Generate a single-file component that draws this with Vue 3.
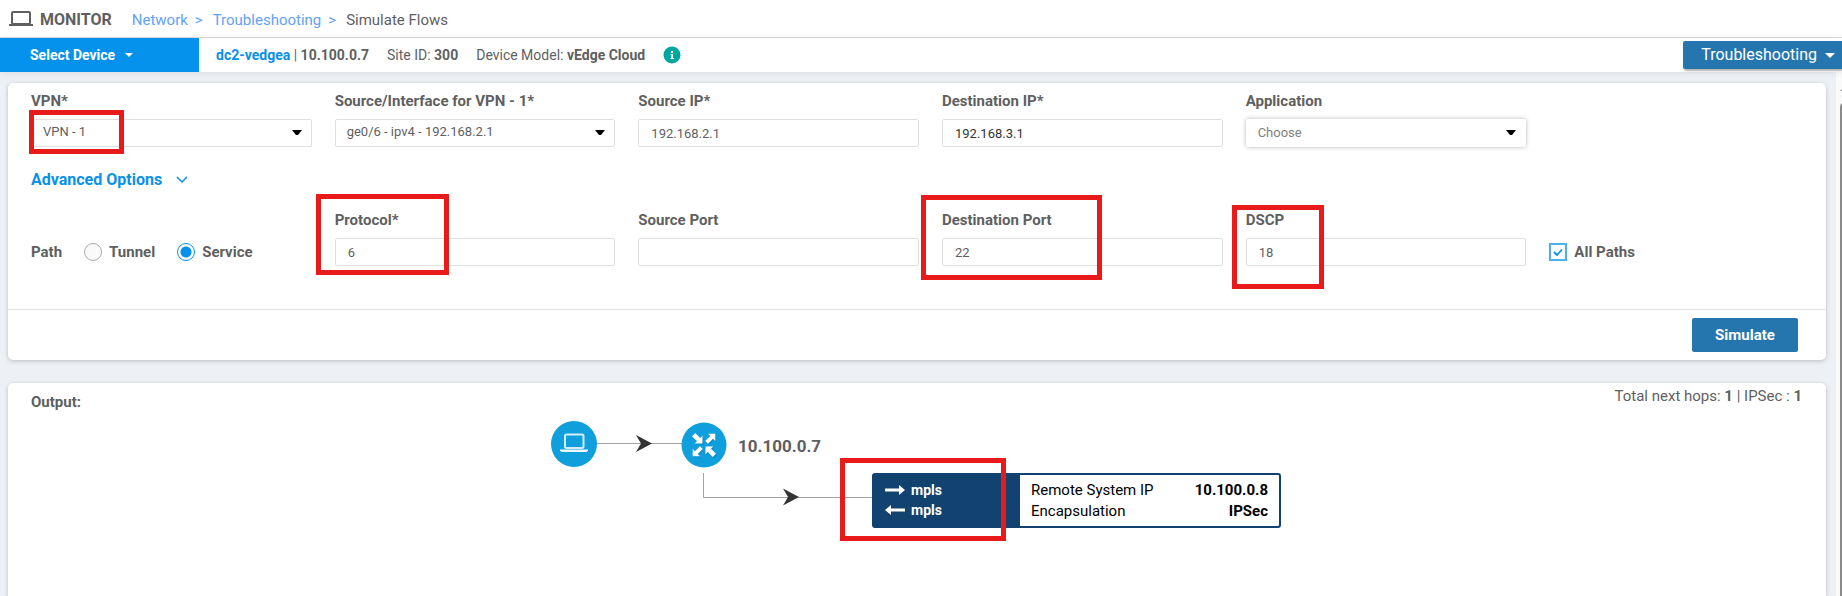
<script setup>
import { ref } from 'vue'

const vpn = ref('VPN - 1')
const sourceInterface = ref('ge0/6 - ipv4 - 192.168.2.1')
const sourceIp = ref('192.168.2.1')
const destinationIp = ref('192.168.3.1')
const application = ref('')
const path = ref('service')
const protocol = ref('6')
const sourcePort = ref('')
const destinationPort = ref('22')
const dscp = ref('18')
const allPaths = ref(true)
const advancedOpen = ref(true)

const routerArrows = [
  'M21.5 21.5V13.7L19.2 16L14.200 11L11 14.200L16 19.200L13.700 21.5Z',
  'M34.300 11.700H27L29.300 14L24.200 19L27 21.800L32 16.700L34.300 19Z',
  'M24.5 24.5V32.300L26.800 30L31.800 35L35 31.800L30 26.800L32.300 24.5Z',
  'M11.700 34.300H19L16.700 32L21.800 27L19 24.200L14 29.300L11.700 27Z',
]
</script>

<template>
  <div class="page">
    <header class="topbar">
      <svg class="laptop" width="24" height="18" viewBox="0 0 24 18" aria-hidden="true">
        <rect x="3" y="2" width="18" height="12" rx="1" fill="none" stroke="#5f5f5f" stroke-width="2" />
        <rect x="0" y="14" width="24" height="2" fill="#5f5f5f" />
      </svg>
      <h1>MONITOR</h1>
      <nav class="crumbs" aria-label="Breadcrumb">
        <a href="#">Network</a><span class="sep">&gt;</span>
        <a href="#">Troubleshooting</a><span class="sep">&gt;</span>
        <span>Simulate Flows</span>
      </nav>
    </header>

    <div class="devicebar">
      <button type="button" class="select-device">
        Select Device
        <svg width="8" height="4" viewBox="0 0 8 4" aria-hidden="true"><path d="M0 0H8L4 4Z" fill="#fff" /></svg>
      </button>
      <div class="device-info">
        <span><a href="#">dc2-vedgea</a> | <b>10.100.0.7</b></span>
        <span>Site ID: <b>300</b></span>
        <span>Device Model: <b>vEdge Cloud</b></span>
        <button type="button" class="info" aria-label="Device details">
          <svg width="18" height="18" viewBox="0 0 18 18" aria-hidden="true">
            <circle cx="9" cy="9" r="8.5" fill="#00a7a0" />
            <rect x="8" y="5" width="2" height="2" fill="#fff" />
            <path d="M7.5 8H10V12H11V13H7.5V12H8.3V9H7.5Z" fill="#fff" />
          </svg>
        </button>
      </div>
      <button type="button" class="troubleshooting">
        Troubleshooting
        <svg width="10" height="5" viewBox="0 0 10 5" aria-hidden="true"><path d="M0 0H10L5 5Z" fill="#fff" /></svg>
      </button>
    </div>

    <div class="body">
      <main>
        <form class="panel" @submit.prevent>
          <div class="grid">
            <div class="field">
              <label for="vpn">VPN*</label>
              <div class="pick">
                <select id="vpn" v-model="vpn"><option>VPN - 1</option></select>
                <svg class="caret" viewBox="0 0 10 5" aria-hidden="true"><path d="M0 0H10L6 5H4Z" /></svg>
              </div>
              <span class="mark mark-vpn"></span>
            </div>
            <div class="field">
              <label for="iface">Source/Interface for VPN - 1*</label>
              <div class="pick">
                <select id="iface" v-model="sourceInterface"><option>ge0/6 - ipv4 - 192.168.2.1</option></select>
                <svg class="caret" viewBox="0 0 10 5" aria-hidden="true"><path d="M0 0H10L6 5H4Z" /></svg>
              </div>
            </div>
            <div class="field">
              <label for="sip">Source IP*</label>
              <input id="sip" v-model="sourceIp" type="text" />
            </div>
            <div class="field">
              <label for="dip">Destination IP*</label>
              <input id="dip" v-model="destinationIp" class="edited" type="text" />
            </div>
            <div class="field">
              <label for="app-name">Application</label>
              <div class="pick raised">
                <select id="app-name" v-model="application"><option value="">Choose</option></select>
                <svg class="caret" viewBox="0 0 10 5" aria-hidden="true"><path d="M0 0H10L6 5H4Z" /></svg>
              </div>
            </div>
          </div>

          <button type="button" class="advanced" :aria-expanded="advancedOpen" @click="advancedOpen = !advancedOpen">
            Advanced Options
            <svg width="12" height="8" viewBox="0 0 12 8" aria-hidden="true">
              <path d="M1 1L6 6L11 1" fill="none" stroke="#0891ea" stroke-width="1.5" />
            </svg>
          </button>

          <div v-show="advancedOpen" class="grid">
            <div class="paths" role="radiogroup" aria-labelledby="path-label">
              <span id="path-label">Path</span>
              <label><input v-model="path" type="radio" name="path" value="tunnel" />Tunnel</label>
              <label><input v-model="path" type="radio" name="path" value="service" />Service</label>
            </div>
            <div class="field">
              <label for="protocol">Protocol*</label>
              <input id="protocol" v-model="protocol" type="text" />
              <span class="mark mark-protocol"></span>
            </div>
            <div class="field">
              <label for="sport">Source Port</label>
              <input id="sport" v-model="sourcePort" type="text" />
            </div>
            <div class="field">
              <label for="dport">Destination Port</label>
              <input id="dport" v-model="destinationPort" type="text" />
              <span class="mark mark-dport"></span>
            </div>
            <div class="field">
              <label for="dscp">DSCP</label>
              <input id="dscp" v-model="dscp" type="text" />
              <span class="mark mark-dscp"></span>
            </div>
            <div class="all-paths">
              <label>
                <span class="tick">
                  <input v-model="allPaths" type="checkbox" />
                  <svg v-if="allPaths" viewBox="0 0 18 18" aria-hidden="true">
                    <path d="M5 9L8 12L13 6.5" fill="none" stroke="#0891ea" stroke-width="1.8" />
                  </svg>
                </span>
                All Paths
              </label>
            </div>
          </div>

          <div class="actions"><button type="submit" class="simulate">Simulate</button></div>
        </form>

        <section class="panel output">
          <div class="output-head">
            <h2>Output:</h2>
            <p>Total next hops: <b>1</b> | IPSec : <b>1</b></p>
          </div>
          <div class="canvas">
            <svg class="wires" width="732" height="80" viewBox="0 0 732 80" aria-hidden="true">
              <path d="M46 22.5H131M152.5 52V76.5H321" fill="none" stroke="#a3a3a3" />
              <path d="M85 14L101 22.5L85 31L90 22.5ZM232 67.5L248 76L232 84.5L237 76Z" fill="#333" />
            </svg>
            <svg class="node host" width="46" height="46" viewBox="0 0 46 46" role="img" aria-label="Host">
              <circle cx="23" cy="23" r="23" fill="#0f9fdc" />
              <rect x="14" y="13.5" width="18.5" height="13.5" rx="1.5" fill="none" stroke="#d3eefb" stroke-width="2" />
              <path d="M9 28.5H37V29.5L35.5 31H10.5L9 29.5Z" fill="#f2fafe" />
            </svg>
            <svg class="node router" width="46" height="46" viewBox="0 0 46 46" role="img" aria-label="Router">
              <circle cx="23" cy="23" r="22.5" fill="#0f9fdc" />
              <g fill="#076fa5" opacity=".45" transform="translate(1 1)">
                <path v-for="d in routerArrows" :key="d" :d="d" />
              </g>
              <g fill="#fff">
                <path v-for="d in routerArrows" :key="d" :d="d" />
              </g>
            </svg>
            <b class="router-name">10.100.0.7</b>
            <div class="tunnel">
              <div class="colors">
                <div>
                  <svg width="20" height="10" viewBox="0 0 20 10" aria-hidden="true"><path d="M0 3.5H14V0L20 5L14 10V6.5H0Z" fill="#fff" /></svg>mpls
                </div>
                <div>
                  <svg width="20" height="10" viewBox="0 0 20 10" aria-hidden="true"><path d="M20 3.5H6V0L0 5L6 10V6.5H20Z" fill="#fff" /></svg>mpls
                </div>
              </div>
              <dl>
                <div><dt>Remote System IP</dt><dd>10.100.0.8</dd></div>
                <div><dt>Encapsulation</dt><dd>IPSec</dd></div>
              </dl>
              <span class="mark mark-tunnel"></span>
            </div>
          </div>
        </section>
      </main>
      <div class="scroll" aria-hidden="true">
        <span class="scroll-up"></span>
        <span class="thumb"></span>
      </div>
    </div>
  </div>
</template>

<style>
body {
  margin: 0;
}
</style>

<style scoped>
.page {
  display: flex;
  flex-direction: column;
  height: 100vh;
  min-height: 560px;
  overflow: hidden;
  background: #edf1f6;
  color: #5f5f5f;
  font: 14px/20px Roboto, "Liberation Sans", sans-serif;
}
.page *,
.page *::before {
  box-sizing: border-box;
}
button,
input,
select {
  font: inherit;
  color: inherit;
  margin: 0;
}
button {
  border: 0;
  cursor: pointer;
}
a {
  text-decoration: none;
}
b {
  font-weight: 700;
}

.topbar {
  display: flex;
  align-items: center;
  flex: none;
  height: 38px;
  padding-left: 9px;
  background: #fff;
  border-bottom: 1px solid #dcdcdc;
}
h1 {
  margin: 2px 20px 0 7px;
  font-size: 16px;
  font-weight: 700;
}
.crumbs {
  display: flex;
  margin-top: 2px;
  font-size: 15px;
}
.crumbs a {
  color: #64a1f8;
}
.sep {
  margin: 0 10px 0 7px;
  color: #64a1f8;
}

.devicebar {
  position: relative;
  z-index: 1;
  display: flex;
  align-items: center;
  flex: none;
  height: 34px;
  background: #fff;
  box-shadow: 0 1px 8px rgba(0, 0, 0, 0.08);
}
.select-device {
  display: flex;
  align-items: center;
  gap: 10px;
  width: 199px;
  height: 34px;
  padding: 0 0 0 30px;
  background: #0492ec;
  color: #fff;
  font-weight: 700;
}
.device-info {
  display: flex;
  align-items: center;
  gap: 18px;
  flex: 1;
  padding-left: 17px;
}
.device-info a {
  color: #0891ea;
  font-weight: 700;
}
.info {
  display: flex;
  padding: 0;
  background: none;
}
.troubleshooting {
  display: flex;
  align-items: center;
  gap: 8px;
  height: 28px;
  padding: 0 7px 0 18px;
  background: #2576ae;
  color: #fff;
  font-size: 16px;
  border-radius: 2px 0 0 2px;
  box-shadow: 1px 2px 2px rgba(0, 0, 0, 0.3);
}

.body {
  display: flex;
  flex: 1;
  min-height: 0;
}
main {
  display: flex;
  flex: 1;
  flex-direction: column;
  gap: 23px;
  min-width: 0;
  padding: 11px 10px 0 8px;
}
.panel {
  background: #fff;
  border-radius: 5px;
  box-shadow: 0 1px 4px rgba(0, 0, 0, 0.22);
}
form.panel {
  padding-top: 8px;
}
.grid {
  display: grid;
  grid-template-columns: repeat(5, minmax(0, 281fr)) minmax(0, 277fr);
  gap: 23px;
  padding-left: 23px;
}
.field {
  position: relative;
}
.field > label {
  display: block;
  margin-bottom: 8px;
  font-size: 15px;
  font-weight: 700;
  white-space: nowrap;
}
.field > input,
select {
  display: block;
  width: 100%;
  height: 28px;
  padding: 0 12px;
  background: #fff;
  border: 1px solid #e0e0e0;
  border-radius: 2px;
  font-size: 13px;
  outline: none;
}
select {
  padding: 0 11px 2px;
  appearance: none;
}
.field > .edited {
  color: #333;
}
.pick {
  position: relative;
}
.caret {
  position: absolute;
  right: 10px;
  top: 11px;
  width: 10px;
  height: 5px;
  fill: #000;
  pointer-events: none;
}
.raised select {
  padding-bottom: 0;
  border-color: transparent;
  color: #7f7f7f;
  box-shadow: 0 0 4px rgba(0, 0, 0, 0.3);
}

.advanced {
  display: flex;
  align-items: center;
  gap: 14px;
  margin: 23px 0 20px 23px;
  padding: 0;
  background: none;
  color: #0891ea;
  font-size: 16px;
  line-height: 20px;
  font-weight: 700;
}
.paths,
.all-paths {
  display: flex;
  align-items: center;
  height: 28px;
  margin-top: 28px;
  font-size: 15px;
  font-weight: 700;
}
.paths label,
.all-paths label {
  display: flex;
  align-items: center;
  gap: 7px;
}
.paths label {
  margin-left: 22px;
}
.paths input {
  appearance: none;
  width: 18px;
  height: 18px;
  border: 1px solid #aaa;
  border-radius: 50%;
  background: #fafafa;
}
.paths input:checked {
  border-color: #0891ea;
  background: radial-gradient(circle, #0891ea 5px, #fff 6px);
}
.tick {
  position: relative;
  display: flex;
}
.tick input {
  appearance: none;
  width: 18px;
  height: 18px;
  border: 2px solid #4ab0f1;
  background: #fff;
}
.tick svg {
  position: absolute;
  inset: 0;
  pointer-events: none;
}

.actions {
  display: flex;
  justify-content: flex-end;
  margin-top: 43px;
  padding: 8px 28px 8px;
  border-top: 1px solid #e2e2e2;
}
.simulate {
  width: 106px;
  height: 34px;
  padding: 0;
  background: #2576ae;
  color: #fff;
  font-size: 15px;
  font-weight: 700;
  border-radius: 2px;
}

.output {
  flex: 1;
  border-radius: 5px 5px 0 0;
}
.output-head {
  display: flex;
  justify-content: space-between;
  padding: 3px 24px 0 23px;
  font-size: 15px;
}
.output-head h2 {
  margin: 6px 0 0;
  font-size: 15px;
  line-height: 20px;
  font-weight: 700;
}
.output-head p {
  margin: 0;
}

/* Topology canvas: nodes are placed freely and joined by wires */
.canvas {
  position: relative;
  width: 732px;
  height: 120px;
  margin: 9px auto 0;
}
.wires,
.node,
.router-name,
.tunnel {
  position: absolute;
}
.wires {
  left: 0;
  top: 0;
  overflow: visible;
}
.host {
  left: 0;
  top: 0;
}
.router {
  left: 130px;
  top: 1px;
}
.router-name {
  left: 187px;
  top: 15px;
  font-size: 17px;
}
.tunnel {
  left: 321px;
  top: 52px;
  display: flex;
  width: 409px;
  border: 2px solid #12426f;
  border-radius: 3px;
  background: #fff;
}
.colors {
  width: 146px;
  padding: 5px 0 4px 11px;
  background: #12426f;
  color: #fff;
  font-weight: 700;
}
.colors div {
  display: flex;
  align-items: center;
  gap: 6px;
}
dl {
  flex: 1;
  margin: 0;
  padding: 5px 11px 4px;
  color: #000;
  font-size: 15px;
  line-height: 21px;
}
dl div {
  display: flex;
  justify-content: space-between;
}
dd {
  margin: 0;
  font-weight: 700;
}

/* Red call-outs over the highlighted values */
.mark {
  position: absolute;
  border: 5px solid #e81a1a;
  pointer-events: none;
}
.mark-vpn {
  left: -2px;
  top: 19px;
  width: 95px;
  height: 44px;
}
.mark-protocol {
  left: -19px;
  top: -16px;
  width: 133px;
  height: 81px;
}
.mark-dport {
  left: -21px;
  top: -15px;
  width: 181px;
  height: 85px;
}
.mark-dscp {
  left: -14px;
  top: -5px;
  width: 92px;
  height: 84px;
}
.mark-tunnel {
  left: -34px;
  top: -17px;
  width: 166px;
  height: 83px;
}

.scroll {
  flex: none;
  width: 6px;
  padding: 14px 0 0 4px;
  background: #fafafa;
  overflow: hidden;
}
.scroll-up {
  display: block;
  width: 0;
  margin-bottom: 12px;
  border: 5px solid transparent;
  border-top: 0;
  border-bottom-color: #8a8a8a;
}
.thumb {
  display: block;
  width: 8px;
  height: 100%;
  border-radius: 4px;
  background: #8a8a8a;
}
</style>
